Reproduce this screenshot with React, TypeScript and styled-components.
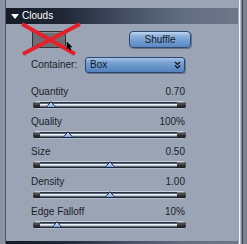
import React from "react";
import styled, { createGlobalStyle } from "styled-components";

const GlobalStyle = createGlobalStyle`
  html, body { margin: 0; padding: 0; background: #9aa4b5; overflow: hidden; }
  body { font-family: "Liberation Sans", Arial, sans-serif; }
  * { box-sizing: border-box; }
`;

const Window = styled.div`
  display: flex;
  width: 247px;
  height: 244px;
  overflow: hidden;
  background: #9aa4b5;
`;

const LeftEdge = styled.div`
  flex: none;
  width: 6px;
  background: #8a93a3;
  border-right: 1px solid #4f5766;
`;

const RightEdge = styled.div`
  flex: none;
  width: 8px;
  background: linear-gradient(
    to right,
    #f2f4f7 0 1px,
    #b6bbc3 1px 2px,
    #878d96 2px 3px,
    #3c4047 3px 4px,
    #7b8393 4px 100%
  );
`;

const Panel = styled.div`
  flex: none;
  width: 233px;
  display: flex;
  flex-direction: column;
  padding-top: 8px;
  background: #9aa4b5;
`;

const SectionHeader = styled.div<{ $top?: number }>`
  flex: none;
  height: 16px;
  margin-right: 1px;
  margin-top: ${(p) => p.$top ?? 0}px;
  display: flex;
  align-items: center;
  gap: 3px;
  padding-left: 5px;
  background: linear-gradient(
    to right,
    #151b28 0%,
    #1f2737 25%,
    #465064 52%,
    #646e81 78%,
    #6e788a 100%
  );
  color: #ffffff;
  font-size: 10px;
  line-height: 16px;
`;

const Body = styled.div`
  display: flex;
  flex-direction: column;
  padding-left: 25px;
`;

const ButtonRow = styled.div`
  display: flex;
  align-items: center;
  justify-content: space-between;
  width: 160px;
  height: 17px;
  margin-top: 7px;
`;

const DisabledSlot = styled.div`
  position: relative;
  width: 34px;
  height: 17px;
  margin-left: 1px;
  border: 1px solid #2f3339;
  border-radius: 2px;
  background: linear-gradient(to bottom, #8e9196 0 1px, #6c7076 1px 100%);
`;

const CrossOverlay = styled.svg`
  position: absolute;
  left: -13px;
  top: -10px;
  width: 62px;
  height: 34px;
  overflow: visible;
`;

const BlueButton = styled.button`
  width: 62px;
  height: 17px;
  padding: 0;
  border: 1px solid #2c4a74;
  border-radius: 4px;
  background: linear-gradient(to bottom, #c2d6ee 0%, #8fb2dc 25%, #719dd0 60%, #5c89c0 100%);
  box-shadow: 1px 1px 0 rgba(20, 30, 50, 0.35);
  font-family: "Liberation Sans", Arial, sans-serif;
  font-size: 10px;
  color: #161b26;
  line-height: 15px;
`;

const SelectRow = styled.div`
  display: flex;
  align-items: center;
  justify-content: space-between;
  width: 154px;
  height: 16px;
  margin-top: 9px;
`;

const Label = styled.span`
  font-size: 10px;
  color: #1a1e28;
  line-height: 12px;
`;

const SelectBox = styled.div`
  display: flex;
  align-items: center;
  justify-content: space-between;
  width: 100px;
  height: 16px;
  padding: 0 3px 0 4px;
  border: 1px solid #2a4772;
  border-radius: 3px;
  background: linear-gradient(to bottom, #a9c4e6 0%, #7ba3d4 30%, #6592c8 65%, #5483bd 100%);
  box-shadow: 1px 1px 0 rgba(20, 30, 50, 0.35);
  font-size: 10px;
  color: #141925;
  line-height: 14px;
`;

const SliderList = styled.div`
  display: flex;
  flex-direction: column;
  gap: 7px;
  margin-top: 13px;
`;

const SliderBlock = styled.div`
  display: flex;
  flex-direction: column;
  gap: 3px;
`;

const LabelRow = styled.div`
  display: flex;
  justify-content: space-between;
  width: 154px;
  height: 12px;
`;

const Track = styled.div`
  position: relative;
  width: 153px;
  height: 8px;
  margin-left: 2px;
  border-radius: 4px;
  background: linear-gradient(
    to bottom,
    #c9d0da 0 1px,
    #283040 1px 2px,
    #556277 2px 3px,
    #eef3f8 3px 4px,
    #bcc7d4 4px 5px,
    #5d6a7e 5px 6px,
    #242b38 6px 7px,
    #b4bcc8 7px 8px
  );

  &::before,
  &::after {
    content: "";
    position: absolute;
    top: 1px;
    height: 6px;
    background: linear-gradient(to bottom, #8a8a8a 0 1px, #4a4a4a 1px 3px, #2c2c2c 3px 5px, #1e1e1e 5px 6px);
  }
  &::before {
    left: 0;
    width: 7px;
    border-radius: 3px 0 0 3px;
  }
  &::after {
    right: 0;
    width: 9px;
    border-radius: 0 3px 3px 0;
  }
`;

const Thumb = styled.svg`
  position: absolute;
  top: 0;
  width: 11px;
  height: 7px;
  transform: translateX(-50%);
  z-index: 1;
`;

type Slider = { label: string; value: string; pos: number };

const sliders: Slider[] = [
  { label: "Quantity", value: "0.70", pos: 17.5 },
  { label: "Quality", value: "100%", pos: 35 },
  { label: "Size", value: "0.50", pos: 77 },
  { label: "Density", value: "1.00", pos: 77 },
  { label: "Edge Falloff", value: "10%", pos: 24 },
];

const TRACK_W = 153;

export default function App() {
  return (
    <>
      <GlobalStyle />
      <Window>
        <LeftEdge />
        <Panel>
          <SectionHeader>
            <svg width="8" height="5" viewBox="0 0 8 5">
              <polygon points="0,0 8,0 4,5" fill="#ffffff" />
            </svg>
            <span>Clouds</span>
          </SectionHeader>
          <Body>
            <ButtonRow>
              <DisabledSlot>
                <CrossOverlay viewBox="0 0 62 34">
                  <line x1="2" y1="2" x2="55" y2="32" stroke="#e4212b" strokeWidth="4" />
                  <line x1="3" y1="32" x2="60" y2="2" stroke="#e4212b" strokeWidth="4" />
                  <polygon
                    points="47,20 47,27 48.5,25.5 50,28.5 51,28 49.7,25 52,25"
                    fill="#000000"
                    stroke="#000000"
                    strokeWidth="0.5"
                  />
                </CrossOverlay>
              </DisabledSlot>
              <BlueButton>Shuffle</BlueButton>
            </ButtonRow>
            <SelectRow>
              <Label>Container:</Label>
              <SelectBox>
                <span>Box</span>
                <svg width="7" height="8" viewBox="0 0 7 8">
                  <polyline points="1,1 3.5,3.5 6,1" fill="none" stroke="#111" strokeWidth="1.2" />
                  <polyline points="1,4.5 3.5,7 6,4.5" fill="none" stroke="#111" strokeWidth="1.2" />
                </svg>
              </SelectBox>
            </SelectRow>
            <SliderList>
              {sliders.map((s) => (
                <SliderBlock key={s.label}>
                  <LabelRow>
                    <Label>{s.label}</Label>
                    <Label>{s.value}</Label>
                  </LabelRow>
                  <Track>
                    <Thumb
                      viewBox="0 0 11 7"
                      style={{ left: `${(s.pos / TRACK_W) * 100}%` }}
                    >
                      <polygon points="5.5,0.7 10.3,6.5 0.7,6.5" fill="#b9d3ef" stroke="#16244a" strokeWidth="1" />
                      <line x1="3" y1="5.3" x2="8" y2="5.3" stroke="#6d94c4" strokeWidth="1" />
                    </Thumb>
                  </Track>
                </SliderBlock>
              ))}
            </SliderList>
          </Body>
          <SectionHeader $top={12} />
        </Panel>
        <RightEdge />
      </Window>
    </>
  );
}
